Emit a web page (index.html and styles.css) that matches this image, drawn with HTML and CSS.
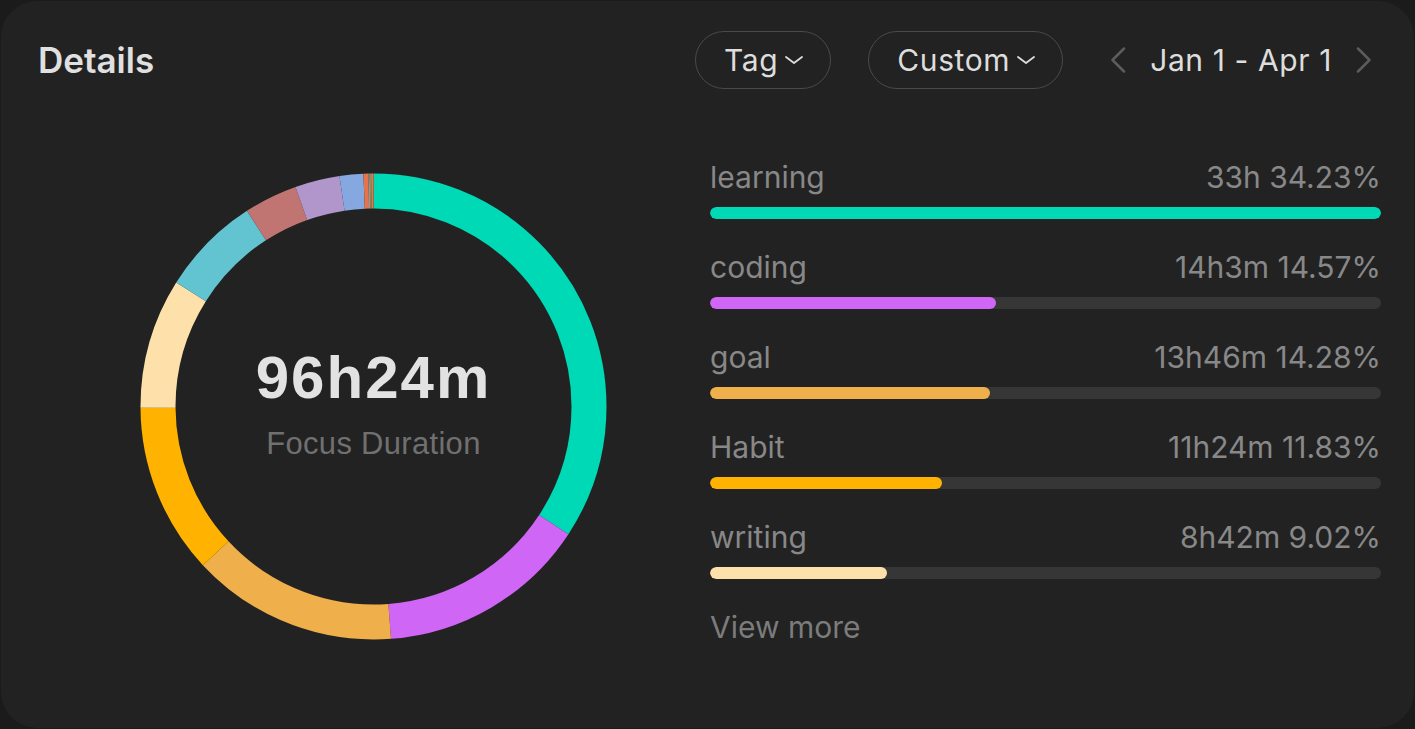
FILE: index.html
```html
<!DOCTYPE html>
<html lang="en">
  <head>
    <meta charset="UTF-8" />
    <meta name="viewport" content="width=device-width, initial-scale=1.0" />
    <title>Details</title>
    <link rel="stylesheet" href="styles.css">
  </head>
  <body>
    <div class="card">
      <header class="card-header">
        <h2 class="title">Details</h2>

        <div class="controls">
          <button class="pill">
            Tag
            <svg class="caret" viewBox="0 0 18 8"><path d="M1 1l8 6 8-6" /></svg>
          </button>
          <button class="pill">
            Custom
            <svg class="caret" viewBox="0 0 18 8"><path d="M1 1l8 6 8-6" /></svg>
          </button>

          <div class="range">
            <svg class="arrow" viewBox="0 0 16 26"><path d="M14 1.5L2.5 13 14 24.5" /></svg>
            <span>Jan 1 - Apr 1</span>
            <svg class="arrow" viewBox="0 0 16 26"><path d="M2 1.5L13.5 13 2 24.5" /></svg>
          </div>
        </div>
      </header>

      <main class="card-body">
        <div class="donut">
          <!-- pathLength=100 so the dash values are just the percentages -->
          <svg viewBox="0 0 467 467">
            <g transform="rotate(-90 233.5 233.5)">
              <circle cx="233.5" cy="233.5" r="215.5" pathLength="100" stroke="#00d9b5" stroke-dasharray="34.23 100" stroke-dashoffset="0" />
              <circle cx="233.5" cy="233.5" r="215.5" pathLength="100" stroke="#cf66f5" stroke-dasharray="14.57 100" stroke-dashoffset="-34.23" />
              <circle cx="233.5" cy="233.5" r="215.5" pathLength="100" stroke="#efb04b" stroke-dasharray="14.28 100" stroke-dashoffset="-48.80" />
              <circle cx="233.5" cy="233.5" r="215.5" pathLength="100" stroke="#ffb300" stroke-dasharray="11.83 100" stroke-dashoffset="-63.08" />
              <circle cx="233.5" cy="233.5" r="215.5" pathLength="100" stroke="#fde0aa" stroke-dasharray="9.02 100" stroke-dashoffset="-74.91" />
              <circle cx="233.5" cy="233.5" r="215.5" pathLength="100" stroke="#62c4d0" stroke-dasharray="6.93 100" stroke-dashoffset="-83.93" />
              <circle cx="233.5" cy="233.5" r="215.5" pathLength="100" stroke="#c07572" stroke-dasharray="3.70 100" stroke-dashoffset="-90.86" />
              <circle cx="233.5" cy="233.5" r="215.5" pathLength="100" stroke="#b196cc" stroke-dasharray="3.10 100" stroke-dashoffset="-94.56" />
              <circle cx="233.5" cy="233.5" r="215.5" pathLength="100" stroke="#86a8e0" stroke-dasharray="1.64 100" stroke-dashoffset="-97.66" />
              <circle cx="233.5" cy="233.5" r="215.5" pathLength="100" stroke="#e8734a" stroke-dasharray="0.34 100" stroke-dashoffset="-99.30" />
              <circle cx="233.5" cy="233.5" r="215.5" pathLength="100" stroke="#9a9a9a" stroke-dasharray="0.10 100" stroke-dashoffset="-99.64" />
              <circle cx="233.5" cy="233.5" r="215.5" pathLength="100" stroke="#6a9f5a" stroke-dasharray="0.09 100" stroke-dashoffset="-99.74" />
              <circle cx="233.5" cy="233.5" r="215.5" pathLength="100" stroke="#e8734a" stroke-dasharray="0.17 100" stroke-dashoffset="-99.83" />
            </g>
          </svg>
          <div class="donut-label">
            <div class="total">96h24m</div>
            <div class="caption">Focus Duration</div>
          </div>
        </div>

        <ul class="tag-list">
          <li class="tag-row">
            <div class="tag-head"><span>learning</span><span>33h 34.23%</span></div>
            <div class="track"><div class="fill learning" style="width: 100%"></div></div>
          </li>
          <li class="tag-row">
            <div class="tag-head"><span>coding</span><span>14h3m 14.57%</span></div>
            <div class="track"><div class="fill coding" style="width: 42.57%"></div></div>
          </li>
          <li class="tag-row">
            <div class="tag-head"><span>goal</span><span>13h46m 14.28%</span></div>
            <div class="track"><div class="fill goal" style="width: 41.72%"></div></div>
          </li>
          <li class="tag-row">
            <div class="tag-head"><span>Habit</span><span>11h24m 11.83%</span></div>
            <div class="track"><div class="fill habit" style="width: 34.56%"></div></div>
          </li>
          <li class="tag-row">
            <div class="tag-head"><span>writing</span><span>8h42m 9.02%</span></div>
            <div class="track"><div class="fill writing" style="width: 26.35%"></div></div>
          </li>
          <li class="view-more">View more</li>
        </ul>
      </main>
    </div>
  </body>
</html>
```

FILE: styles.css
```css
body {
  margin: 0;
  background: #1b1b1b;
  font-family: "Inter", "Noto Sans", sans-serif;
}

.card {
  box-sizing: border-box;
  margin: 1px;
  height: calc(100vh - 2px);
  background: #222;
  border-radius: 36px;
  padding: 30px 33px 0 37px;
  overflow: hidden;
}

/* header */
.card-header {
  display: flex;
  align-items: center;
  justify-content: space-between;
  height: 58px;
}

.title {
  margin: 0;
  font-size: 35px;
  font-weight: 600;
  color: #e0e0e0;
}

.controls {
  display: flex;
  align-items: center;
  margin-right: 9px;
}

.pill {
  display: flex;
  align-items: center;
  gap: 7px;
  height: 58px;
  padding: 0 27px 0 28px;
  margin-right: 37px;
  border: 1.5px solid #4a4a4a;
  border-radius: 29px;
  background: transparent;
  color: #ddd;
  font: inherit;
  font-size: 30px;
  letter-spacing: 0.6px;
  cursor: pointer;
}

.caret {
  width: 18px;
  height: 8px;
  fill: none;
  stroke: #ddd;
  stroke-width: 1.8;
  stroke-linecap: round;
  stroke-linejoin: round;
}

.range {
  display: flex;
  align-items: center;
  gap: 24px;
  color: #ddd;
  font-size: 30px;
  letter-spacing: 0.6px;
  margin-left: 10px;
}

.arrow {
  width: 16px;
  height: 26px;
  fill: none;
  stroke: #5c5c5c;
  stroke-width: 2.5;
  stroke-linecap: round;
  stroke-linejoin: round;
}

/* body */
.card-body {
  display: flex;
  align-items: flex-start;
  padding-top: 70px;
}

.donut {
  display: grid;
  place-items: center;
  width: 467px;
  height: 467px;
  margin: 14px 103px 0 102px;
  flex-shrink: 0;
}

.donut svg,
.donut-label {
  grid-area: 1 / 1;
}

.donut svg {
  width: 467px;
  height: 467px;
}

.donut circle {
  fill: none;
  stroke-width: 35;
}

.donut-label {
  padding-bottom: 6px;
  text-align: center;
  font-family: "Liberation Sans", Arial, sans-serif;
}

.total {
  font-size: 60px;
  line-height: 1;
  font-weight: bold;
  letter-spacing: 2px;
  color: #e2e2e2;
}

.caption {
  margin-top: 20px;
  font-size: 31px;
  line-height: 1;
  letter-spacing: 0.3px;
  color: #707070;
}

.tag-list {
  flex: 1;
  list-style: none;
  margin: 0;
  padding: 0;
}

.tag-row {
  margin-bottom: 30px;
}

.tag-head {
  display: flex;
  justify-content: space-between;
  font-size: 30px;
  line-height: 36px;
  color: #888;
}

.track {
  height: 12px;
  margin-top: 12px;
  border-radius: 6px;
  background: #363636;
  overflow: hidden;
}

.fill {
  height: 100%;
  border-radius: 6px;
}

.fill.learning { background: #00d9b5; }
.fill.coding { background: #cf66f5; }
.fill.goal { background: #efb04b; }
.fill.habit { background: #ffb300; }
.fill.writing { background: #fde0aa; }

.view-more {
  font-size: 30px;
  line-height: 36px;
  color: #7c7c7c;
}
```
